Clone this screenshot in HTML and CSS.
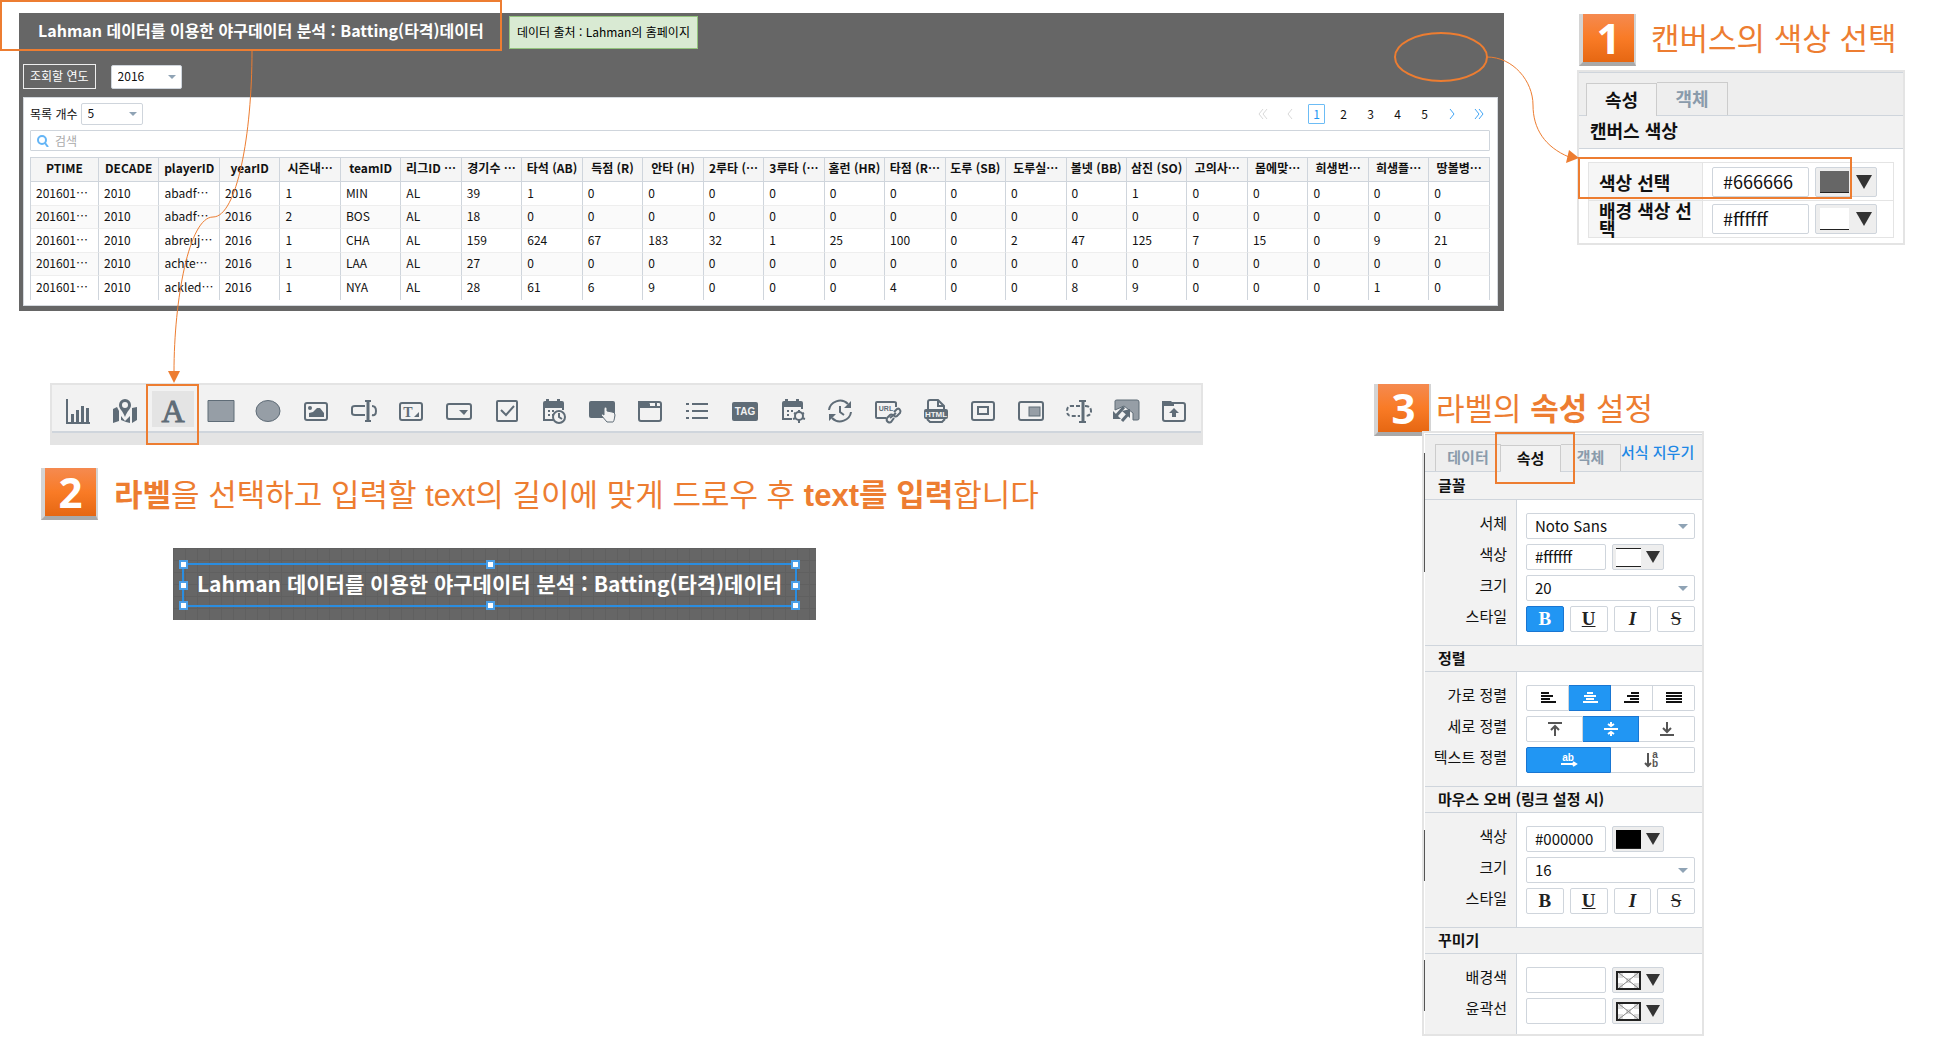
FILE: index.html
```html
<!DOCTYPE html>
<html lang="ko">
<head>
<meta charset="utf-8">
<title>Lahman 야구데이터 대시보드 만들기</title>
<link rel="stylesheet" href="styles.css">
</head>
<body>
<main class="page">
  <div class="row row-top">
    <section class="dashboard">
      <header class="dash-head">
        <h1 class="dash-title">Lahman 데이터를 이용한 야구데이터 분석 : Batting(타격)데이터</h1>
        <a class="source" href="#source">데이터 출처 : Lahman의 홈페이지</a>
      </header>
      <div class="filter">
        <label class="filter-label" for="year">조회할 연도</label>
        <span class="select select-year"><select id="year"><option>2016</option></select></span>
      </div>
      <div class="card">
        <div class="card-top">
          <label for="count">목록 개수</label>
          <span class="select select-count"><select id="count"><option>5</option></select></span>
          <nav class="pager" aria-label="페이지">
            <button class="off" type="button" aria-label="처음"><svg viewBox="0 0 12 12"><path d="M6 1 2 6l4 5M10 1 6 6l4 5"/></svg></button>
            <button class="off" type="button" aria-label="이전"><svg viewBox="0 0 12 12"><path d="M8 1 4 6l4 5"/></svg></button>
            <button class="on" type="button">1</button>
            <button type="button">2</button>
            <button type="button">3</button>
            <button type="button">4</button>
            <button type="button">5</button>
            <button class="go" type="button" aria-label="다음"><svg viewBox="0 0 12 12"><path d="m4 1 4 5-4 5"/></svg></button>
            <button class="go" type="button" aria-label="마지막"><svg viewBox="0 0 12 12"><path d="m2 1 4 5-4 5M6 1l4 5-4 5"/></svg></button>
          </nav>
        </div>
        <div class="search">
          <svg viewBox="0 0 12 12"><circle cx="5" cy="5" r="4"/><path d="m8 8 3 4"/></svg>
          <input type="text" placeholder="검색" aria-label="검색">
        </div>
        <table class="grid">
          <colgroup><col class="first"></colgroup>
          <thead>
            <tr><th>PTIME</th><th>DECADE</th><th>playerID</th><th>yearID</th><th>시즌내⋯</th><th>teamID</th><th>리그ID ⋯</th><th>경기수 ⋯</th><th>타석 (AB)</th><th>득점 (R)</th><th>안타 (H)</th><th>2루타 (⋯</th><th>3루타 (⋯</th><th>홈런 (HR)</th><th>타점 (R⋯</th><th>도루 (SB)</th><th>도루실⋯</th><th>볼넷 (BB)</th><th>삼진 (SO)</th><th>고의사⋯</th><th>몸에맞⋯</th><th>희생번⋯</th><th>희생플⋯</th><th>땅볼병⋯</th></tr>
          </thead>
          <tbody>
            <tr><td>201601⋯</td><td>2010</td><td>abadf⋯</td><td>2016</td><td>1</td><td>MIN</td><td>AL</td><td>39</td><td>1</td><td>0</td><td>0</td><td>0</td><td>0</td><td>0</td><td>0</td><td>0</td><td>0</td><td>0</td><td>1</td><td>0</td><td>0</td><td>0</td><td>0</td><td>0</td></tr>
            <tr><td>201601⋯</td><td>2010</td><td>abadf⋯</td><td>2016</td><td>2</td><td>BOS</td><td>AL</td><td>18</td><td>0</td><td>0</td><td>0</td><td>0</td><td>0</td><td>0</td><td>0</td><td>0</td><td>0</td><td>0</td><td>0</td><td>0</td><td>0</td><td>0</td><td>0</td><td>0</td></tr>
            <tr><td>201601⋯</td><td>2010</td><td>abreuj⋯</td><td>2016</td><td>1</td><td>CHA</td><td>AL</td><td>159</td><td>624</td><td>67</td><td>183</td><td>32</td><td>1</td><td>25</td><td>100</td><td>0</td><td>2</td><td>47</td><td>125</td><td>7</td><td>15</td><td>0</td><td>9</td><td>21</td></tr>
            <tr><td>201601⋯</td><td>2010</td><td>achte⋯</td><td>2016</td><td>1</td><td>LAA</td><td>AL</td><td>27</td><td>0</td><td>0</td><td>0</td><td>0</td><td>0</td><td>0</td><td>0</td><td>0</td><td>0</td><td>0</td><td>0</td><td>0</td><td>0</td><td>0</td><td>0</td><td>0</td></tr>
            <tr><td>201601⋯</td><td>2010</td><td>ackled⋯</td><td>2016</td><td>1</td><td>NYA</td><td>AL</td><td>28</td><td>61</td><td>6</td><td>9</td><td>0</td><td>0</td><td>0</td><td>4</td><td>0</td><td>0</td><td>8</td><td>9</td><td>0</td><td>0</td><td>0</td><td>1</td><td>0</td></tr>
          </tbody>
        </table>
      </div>
      <span class="mark mark-title"></span>
      <svg class="link-canvas" viewBox="0 0 192 140" aria-hidden="true">
        <ellipse cx="52" cy="32" rx="46" ry="24"/>
        <path class="thin" d="M98 32C124 32 144 56 144 80S156 122 180 132"/>
        <path class="tip" d="M180 125 177 138 190 133z"/>
      </svg>
      <svg class="link-label" viewBox="0 0 100 340" aria-hidden="true">
        <path class="thin" d="M92 11C92 94 77 177 53 177S14 260 14 332"/>
        <path class="tip" d="M8 331H20L14 343z"/>
      </svg>
    </section>

    <section class="side side-canvas">
      <h2 class="step step-one"><span class="badge">1</span><span class="step-text">캔버스의 색상 선택</span></h2>
      <div class="panel panel-canvas">
        <div class="tabs"><button class="tab on" type="button">속성</button><button class="tab" type="button">객체</button></div>
        <h3 class="head">캔버스 색상</h3>
        <div class="pairs">
          <label class="pair-name" for="canvas-color">색상 선택</label>
          <div class="pair-value"><input class="text" id="canvas-color" type="text" value="#666666"><button class="swatch" type="button" aria-label="색상 선택"><span class="chip chip-gray"></span><span class="caret"></span></button></div>
          <label class="pair-name" for="back-color">배경 색상 선택</label>
          <div class="pair-value"><input class="text" id="back-color" type="text" value="#ffffff"><button class="swatch" type="button" aria-label="배경 색상 선택"><span class="chip"></span><span class="caret"></span></button></div>
        </div>
        <span class="mark mark-color"></span>
      </div>
    </section>
  </div>

  <div class="row row-bottom">
    <section class="work">
      <div class="toolbar">
        <div class="tools">
          <button type="button" aria-label="차트"><svg viewBox="0 0 26 26"><path class="s" d="M2 1v24h23"/><path class="f" d="M6 16h3v8H6zM11 12h3v12h-3zM16 8h3v16h-3zM21 10h3v14h-3z"/></svg></button>
          <button type="button" aria-label="지도"><svg viewBox="0 0 26 26"><path class="f" d="M1 11l4-2 2 4v10l-6 2zM20 10l5-1v13l-5 3zM9 18l4 5 5-5v7l-4-1-5-2z"/><path class="f" fill-rule="evenodd" d="M13 1a6 6 0 0 1 6 6c0 4-4 6-6 12C11 13 7 11 7 7a6 6 0 0 1 6-6zm0 3a3 3 0 1 0 0 6 3 3 0 0 0 0-6z"/></svg></button>
          <button class="on" type="button" aria-label="라벨"><svg viewBox="0 0 26 26"><text x="13" y="24" class="glyph-a">A</text></svg><span class="mark mark-tool"></span></button>
          <button type="button" aria-label="사각형"><svg viewBox="0 0 26 26"><path class="g" d="M0 2.500h26v21H0z"/></svg></button>
          <button type="button" aria-label="원"><svg viewBox="0 0 26 26"><ellipse class="g" cx="13" cy="13" rx="12" ry="10.500"/></svg></button>
          <button type="button" aria-label="이미지"><svg viewBox="0 0 26 26"><rect class="s" x="2" y="5" width="22" height="17" rx="2"/><path class="f" d="M6 19v-4l4-1 4-4h3l4 5v4z"/><circle class="f" cx="7" cy="10" r="2"/></svg></button>
          <button type="button" aria-label="입력 상자"><svg viewBox="0 0 26 26"><path class="s" d="M14 8H4Q1 8 1 10v5q0 2 3 2h10M21 8q4 0 4 5t-4 4M14 3h6M14 23h6"/><path class="s w" d="M17 3v20"/></svg></button>
          <button type="button" aria-label="텍스트 영역"><svg viewBox="0 0 26 26"><rect class="s" x="2" y="5" width="22" height="17" rx="2"/><text class="glyph-t" x="10" y="19">T</text><path class="f" d="M21 14v5h-5z"/></svg></button>
          <button type="button" aria-label="콤보 상자"><svg viewBox="0 0 26 26"><rect class="s" x="1" y="6" width="24" height="15" rx="2"/><path class="f" d="M13 12h9l-4 5z"/></svg></button>
          <button type="button" aria-label="체크 상자"><svg viewBox="0 0 26 26"><rect class="s" x="3" y="3" width="20" height="20" rx="1"/><path class="s" d="m7 12 5 5 8-9"/></svg></button>
          <button type="button" aria-label="날짜"><svg viewBox="0 0 26 26"><path class="f" d="M2 10V5q0-2 2-2h1V1h3v2h8V1h3v2h2q2 0 2 2v5z"/><path class="s" d="M22 12V9M3 9v13h9"/><path class="f" d="M7 12h2v2H7zM11 12h2v2h-2zM7 16h2v2H7zM11 16h2v2h-2z"/><circle class="s l" cx="18" cy="19" r="6"/><path class="s" d="M18 15v4l3 2"/></svg></button>
          <button type="button" aria-label="버튼"><svg viewBox="0 0 26 26"><rect class="f" x="0" y="3" width="26" height="17" rx="2"/><path class="l e" d="M15 10q2-2 3 0v3l5 1q3 0 3 3-1 7-2 7h-6l-6-7q1-2 3 0z"/></svg></button>
          <button type="button" aria-label="탭"><svg viewBox="0 0 26 26"><rect class="s" x="2" y="4" width="22" height="19" rx="2"/><path class="f" d="M1 3h10l2 3v4H1zM13 8h11v2H13zM18 5h2v4h-2z"/></svg></button>
          <button type="button" aria-label="목록"><svg viewBox="0 0 26 26"><path class="s" d="M8 6h16M8 13h16M8 20h16M2 6h3M2 13h3M2 20h3"/></svg></button>
          <button type="button" aria-label="태그"><svg viewBox="0 0 26 26"><rect class="f" x="0" y="4" width="26" height="19" rx="2"/><text class="glyph-tag" x="13" y="17">TAG</text></svg></button>
          <button type="button" aria-label="일정 설정"><svg viewBox="0 0 26 26"><path class="f" d="M2 9V5q0-2 2-2h1V1h3v2h8V1h3v2h2q2 0 2 2v4z"/><path class="s" d="M22 11V9M3 9v12h9"/><path class="f" d="M7 12h2v2H7zM11 12h2v2h-2zM7 16h2v2H7z"/><circle class="s l" cx="19" cy="18" r="4"/><path class="s" d="M19 12v2M19 22v3M14 15l2 1M22 20l3 1M24 15l-2 1M16 20l-3 1"/></svg></button>
          <button type="button" aria-label="새로 고침"><svg viewBox="0 0 26 26"><path class="s" d="M2 12C3 4 14-1 21 6M24 14C23 22 12 27 5 20M13 8v6l4 3"/><path class="f" d="M24 3v7h-7zM2 23v-7h7z"/></svg></button>
          <button type="button" aria-label="URL"><svg viewBox="0 0 26 26"><path class="s" d="M21 9V5q0-1-2-1H2Q1 4 1 5v14q0 1 1 1h9"/><text class="glyph-url" x="11" y="13">URL</text><path class="s" d="m15 20 6-5M19 14l3-3q2-1 3 1 1 1 0 3l-3 3q-1 1-3 0M18 17q-2-1-3 0l-3 3q-1 3 1 4 2 1 3 0l3-4"/></svg></button>
          <button type="button" aria-label="HTML"><svg viewBox="0 0 26 26"><path class="s" d="M5 11V4q0-2 2-2h8l6 6v3M15 2v6h6M4 21l3 3h12l3-3"/><rect class="f" x="1" y="11" width="24" height="10" rx="2"/><text class="glyph-html" x="13" y="19">HTML</text></svg></button>
          <button type="button" aria-label="팝업"><svg viewBox="0 0 26 26"><rect class="s" x="2" y="4" width="22" height="18" rx="2"/><rect class="s" x="8" y="9" width="10" height="7"/></svg></button>
          <button type="button" aria-label="패널"><svg viewBox="0 0 26 26"><rect class="s" x="1" y="4" width="24" height="18" rx="2"/><rect class="g" x="11" y="9" width="11" height="9"/></svg></button>
          <button type="button" aria-label="다중 입력"><svg viewBox="0 0 26 26"><path class="s" stroke-dasharray="4 2" d="M14 8H5Q1 8 1 13t4 5h9M19 8q6 0 6 5t-6 5"/><path class="s" d="M13 3h7M13 24h7"/><path class="s w" d="M17 3v20"/></svg></button>
          <button type="button" aria-label="확장"><svg viewBox="0 0 26 26"><path class="g" d="M2 12V3q0-1 2-1h20q2 0 2 2v17q0 1-2 1h-4v-7L11 8z"/><path class="s w" d="m3 18 8-9M9 23l7-8"/><path class="f" d="M0 13v8h8zM17 11v9l-8-7z"/></svg></button>
          <button type="button" aria-label="올리기"><svg viewBox="0 0 26 26"><rect class="s" x="2" y="5" width="22" height="18" rx="2"/><path class="f" d="M1 3h9l3 3v2H1zM13 10l5 5h-3v4h-4v-4H8z"/></svg></button>
        </div>
      </div>
      <h2 class="step step-two"><span class="badge">2</span><span class="step-text"><b>라벨</b>을 선택하고 입력할 <span class="latin">text</span>의 길이에 맞게 드로우 후 <b><span class="latin">text</span>를 입력</b>합니다</span></h2>
      <div class="canvas">
        <div class="picked">Lahman 데이터를 이용한 야구데이터 분석 : Batting(타격)데이터
          <i class="knob t l"></i><i class="knob t c"></i><i class="knob t r"></i><i class="knob m l"></i><i class="knob m r"></i><i class="knob b l"></i><i class="knob b c"></i><i class="knob b r"></i>
        </div>
      </div>
    </section>

    <section class="side side-label">
      <h2 class="step step-three"><span class="badge">3</span><span class="step-text">라벨의 <b>속성</b> 설정</span></h2>
      <div class="panel panel-label">
        <div class="tabs"><button class="tab" type="button">데이터</button><button class="tab on" type="button">속성</button><button class="tab" type="button">객체</button><a class="clear" href="#clear">서식 지우기</a></div>
        <h3 class="head">글꼴</h3>
        <div class="form">
          <label for="font">서체</label><div class="field"><span class="select"><select id="font"><option>Noto Sans</option></select></span></div>
          <label for="color">색상</label><div class="field"><input class="text" id="color" type="text" value="#ffffff"><button class="swatch" type="button" aria-label="색상"><span class="chip chip-lined"></span><span class="caret"></span></button></div>
          <label for="size">크기</label><div class="field"><span class="select"><select id="size"><option>20</option></select></span></div>
          <span class="name">스타일</span><div class="field styles"><button class="on" type="button"><b>B</b></button><button type="button"><u>U</u></button><button type="button"><i>I</i></button><button type="button"><s>S</s></button></div>
        </div>
        <h3 class="head">정렬</h3>
        <div class="form">
          <span class="name">가로 정렬</span>
          <div class="field segs">
            <button type="button" aria-label="왼쪽"><svg viewBox="0 0 16 14"><path d="M1 2h8M1 5h12M1 8h9M1 11h15"/></svg></button>
            <button class="on" type="button" aria-label="가운데"><svg viewBox="0 0 16 14"><path d="M5 2h6M2 5h12M4 8h8M1 11h15"/></svg></button>
            <button type="button" aria-label="오른쪽"><svg viewBox="0 0 16 14"><path d="M7 2h8M3 5h12M6 8h9M0 11h15"/></svg></button>
            <button type="button" aria-label="양쪽"><svg viewBox="0 0 16 14"><path d="M0 2h16M0 5h16M0 8h16M0 11h16"/></svg></button>
          </div>
          <span class="name">세로 정렬</span>
          <div class="field segs">
            <button class="soft" type="button" aria-label="위"><svg viewBox="0 0 16 14"><path d="M1 1h14M8 14V4M4 8l4-4 4 4"/></svg></button>
            <button class="on" type="button" aria-label="중간"><svg viewBox="0 0 16 14"><path d="M1 7h14M8 0v4M8 10v4M5 2l3 2 3-2M5 12l3-2 3 2"/></svg></button>
            <button class="soft" type="button" aria-label="아래"><svg viewBox="0 0 16 14"><path d="M1 13h14M8 0v10M4 6l4 4 4-4"/></svg></button>
          </div>
          <span class="name">텍스트 정렬</span>
          <div class="field segs">
            <button class="on" type="button" aria-label="가로쓰기"><svg viewBox="0 0 16 14"><text x="7" y="8">ab</text><path d="M0 11h15M12 9l3 2-3 2"/></svg></button>
            <button class="soft" type="button" aria-label="세로쓰기"><svg viewBox="0 0 16 14"><path d="M3 0v13M0 10l3 3 3-3"/><text x="10" y="5">a</text><text x="10" y="14">b</text></svg></button>
          </div>
        </div>
        <h3 class="head">마우스 오버 (링크 설정 시)</h3>
        <div class="form">
          <label for="over-color">색상</label><div class="field"><input class="text" id="over-color" type="text" value="#000000"><button class="swatch" type="button" aria-label="색상"><span class="chip chip-black"></span><span class="caret"></span></button></div>
          <label for="over-size">크기</label><div class="field"><span class="select"><select id="over-size"><option>16</option></select></span></div>
          <span class="name">스타일</span><div class="field styles"><button type="button"><b>B</b></button><button type="button"><u>U</u></button><button type="button"><i>I</i></button><button type="button"><s>S</s></button></div>
        </div>
        <h3 class="head">꾸미기</h3>
        <div class="form form-last">
          <label for="fill">배경색</label><div class="field"><input class="text" id="fill" type="text"><button class="swatch" type="button" aria-label="배경색"><svg class="none" viewBox="0 0 25 19"><path class="tile" d="M2 2h5v5H2zM18 2h5v5h-5zM10 7h5v5h-5zM2 12h5v5H2zM18 12h5v5h-5z"/><path d="M3 2l19 15M22 2 3 17"/><rect x="1" y="1" width="23" height="17"/></svg><span class="caret"></span></button></div>
          <label for="outline">윤곽선</label><div class="field"><input class="text" id="outline" type="text"><button class="swatch" type="button" aria-label="윤곽선"><svg class="none" viewBox="0 0 25 19"><path class="tile" d="M2 2h5v5H2zM18 2h5v5h-5zM10 7h5v5h-5zM2 12h5v5H2zM18 12h5v5h-5z"/><path d="M3 2l19 15M22 2 3 17"/><rect x="1" y="1" width="23" height="17"/></svg><span class="caret"></span></button></div>
        </div>
        <span class="edge edge-a"></span><span class="edge edge-b"></span><span class="edge edge-c"></span>
        <span class="mark mark-tab"></span>
      </div>
    </section>
  </div>
</main>
</body>
</html>
```
FILE: styles.css
```css
:root {
  --orange: #ed7d31;
  --slate: #5f6c77;
  --line: #cfd5dc;
  --blue: #2196f3;
}
* { box-sizing: border-box; }
body {
  margin: 0;
  background: #fff;
  color: #111;
  font-family: "Noto Sans CJK KR", "Noto Sans", sans-serif;
  font-size: 15px;
  overflow-x: hidden;
}
h1, h2, h3 { margin: 0; }
button, input, select { font: inherit; color: inherit; margin: 0; padding: 0; }
button { cursor: pointer; }
a { text-decoration: none; color: inherit; }

.row { display: flex; align-items: flex-start; }
.row-top { padding: 13px 28px 0 19px; gap: 73px; }
.row-bottom { margin-top: 72px; padding: 0 229px 0 41px; gap: 171px; }

/* orange callouts */
.mark { position: absolute; border: 2px solid var(--orange); pointer-events: none; z-index: 3; }
.link-canvas, .link-label { position: absolute; z-index: 4; fill: none; stroke: var(--orange); stroke-width: 2; overflow: visible; pointer-events: none; }
.link-canvas { width: 192px; height: 140px; top: 12px; right: -77px; }
.link-label { width: 100px; height: 340px; top: 27px; left: 141px; }
.thin { stroke-width: 1; }
.tip { fill: var(--orange); stroke: none; }

/* dashboard */
.dashboard { position: relative; flex: 1; min-width: 0; background: #666; padding: 3px 6px 5px 4px; }
.mark-title { left: -19px; top: -13px; width: 502px; height: 51px; }
.dash-head { display: flex; align-items: flex-start; }
.dash-title { width: 486px; padding-left: 15px; font-size: 16px; line-height: 28px; color: #fff; white-space: nowrap; }
.source { height: 33px; padding: 0 7px; border: 1px solid #93c47d; background: #d9ead3; color: #000; font-size: 12px; line-height: 30px; white-space: nowrap; }
.filter { display: flex; gap: 15px; margin-top: 15px; align-items: center; }
.filter-label { height: 25px; padding: 0 6px; border: 1px solid #eee; color: #fff; font-size: 12px; line-height: 22px; }

.select { position: relative; display: block; flex: 1; height: 26px; }
.select select { display: block; width: 100%; height: 100%; padding: 0 8px 2px; border: 1px solid var(--line); border-radius: 2px; background: #fff; appearance: none; outline: 0; }
.select::after { content: ""; position: absolute; right: 7px; top: 50%; margin-top: -2px; border: 5px solid transparent; border-top-color: #8fa3b5; border-bottom: 0; pointer-events: none; }
.select-year, .select-count { flex: none; font-size: 12px; }
.select-year { width: 71px; height: 24px; }
.select-count { width: 62px; height: 22px; }
.select-year select, .select-count select { padding: 0 6px 2px; }
.select-year::after, .select-count::after { border-width: 4px; border-bottom: 0; right: 6px; }

.card { margin-top: 8px; padding: 5px 7px 5px 6px; border: 1px solid #d5d9de; background: #fff; }
.card-top { display: flex; align-items: center; gap: 3px; font-size: 12px; height: 22px; line-height: 18px; }
.pager { margin-left: auto; display: flex; align-items: center; gap: 10px; padding-right: 3px; }
.pager button { width: 17px; height: 20px; border: 1px solid transparent; border-radius: 1px; background: none; font-size: 12px; line-height: 16px; }
.pager .on { border-color: #6cbcf5; color: var(--blue); }
.pager svg { display: block; margin: auto; width: 12px; height: 12px; fill: none; stroke: #42a5f5; }
.pager .off svg { stroke: #d9d9d9; }
.search { display: flex; align-items: center; gap: 6px; height: 21px; margin: 5px 0 6px; padding: 0 6px; border: 1px solid var(--line); border-radius: 1px; }
.search svg { width: 12px; height: 12px; fill: none; stroke: #64b5f6; stroke-width: 2; }
.search input { flex: 1; height: 16px; border: 0; outline: 0; font-size: 12px; line-height: 16px; }
.search input::placeholder { color: #aaa; }

.grid { width: 100%; table-layout: fixed; border-collapse: separate; border-spacing: 0; font-size: 12px; line-height: 16px; border-left: 1px solid var(--line); }
.first { width: 68px; }
.grid th, .grid td { height: 23px; padding: 0 0 2px 5px; border-right: 1px solid var(--line); white-space: nowrap; overflow: hidden; }
.grid th { height: 25px; padding: 0 2px 4px; text-align: center; border-top: 1px solid var(--line); border-bottom: 1px solid var(--line); background: #f5f5f5; }
.grid td { text-align: left; border-bottom: 1px solid #eee; }
.grid tbody tr:nth-child(odd) td { height: 24px; }
.grid tbody tr:nth-child(even) td { background: #fafafa; }
.grid tbody tr:last-child td { border-bottom: 0; }

/* step headings */
.step { display: flex; font-size: 31px; font-weight: 400; color: var(--orange); }
.step-text { line-height: 46px; white-space: nowrap; }
.badge {
  flex: none; width: 57px; height: 52px; border: solid #d4d4d4; border-width: 0 2px 4px 4px; border-bottom-color: #a9a9a9;
  background: linear-gradient(#f58a50, #f97b26 50%, #e66712);
  color: #fff; font: bold 42px/48px "Noto Sans", sans-serif; text-align: center;
}
.latin { font-family: "Liberation Sans", sans-serif; }
.step-one { gap: 15px; margin: 1px 0 4px 2px; }
.step-two { gap: 16px; margin-top: 23px; height: 52px; }
.step-two .step-text { line-height: 50px; }
.step-three { gap: 5px; height: 47px; margin-top: 1px; }

/* property panels */
.side-canvas { flex: none; width: 328px; }
.side-label { flex: none; width: 330px; }
.panel { position: relative; border: 2px solid #e4e4e4; background: #fff; z-index: 1; }
.tabs { display: flex; align-items: flex-end; background: #eee; border-top: 1px solid var(--line); border-bottom: 1px solid var(--line); }
.tab { border: 1px solid #ccc; border-bottom: 0; background: #eee; color: #8a9bab; font-weight: 700; }
.tab + .tab { border-left: 0; }
.tab.on { background: #f2f2f2; color: #111; margin-bottom: -1px; }
.head { background: #f2f2f2; border-bottom: 1px solid var(--line); font-size: inherit; font-weight: 700; }
.text { height: 26px; border: 1px solid var(--line); border-radius: 2px; background: #fff; outline: 0; padding: 0 8px 2px; }
.swatch { display: flex; align-items: center; justify-content: space-between; height: 26px; padding: 0 3px; border: 1px solid var(--line); border-radius: 2px; background: #eee; }
.chip { width: 25px; height: 19px; background: #fff; border-bottom: 1px solid #222; }
.chip-lined { border-top: 1px solid #222; }
.chip-black { background: #000; }
.chip-gray { background: #666; }
.caret { border: 7px solid transparent; border-top: 12px solid #333; border-bottom: 0; }
.none { width: 25px; height: 19px; fill: none; stroke: #888; background: #fff; }
.none .tile { fill: #ddd; stroke: none; }
.none rect { stroke: #222; stroke-width: 2; }

.panel-canvas { font-size: 18px; padding-bottom: 5px; }
.panel-canvas .tabs { height: 44px; padding-left: 7px; }
.panel-canvas .tab { width: 71px; height: 33px; padding-bottom: 2px; line-height: 28px; }
.panel-canvas .head { height: 33px; padding-left: 11px; line-height: 29px; }
.pairs { display: grid; grid-template-columns: 114px 1fr; margin: 13px 9px 0; border: 1px solid #e4e4e4; }
.pairs > * { height: 37px; }
.pairs > :nth-child(n+3) { border-top: 1px solid #e4e4e4; }
.pair-name { display: flex; align-items: center; padding: 0 10px; background: #f6f6f6; border-right: 1px solid #e4e4e4; font-weight: 700; line-height: 18px; word-break: break-all; }
.pair-value { display: flex; align-items: center; gap: 6px; padding-left: 9px; }
.panel-canvas .text { width: 97px; height: 30px; padding: 0 10px 2px; }
.panel-canvas .swatch { width: 62px; height: 30px; padding: 0 4px; }
.panel-canvas .chip { width: 29px; height: 22px; }
.panel-canvas .caret { border-width: 14px 8px 0; }
.mark-color { left: -1px; top: 85px; width: 274px; height: 42px; }

.panel-label { margin-left: 48px; padding-left: 1px; }
.panel-label .tabs { height: 38px; padding-left: 10px; margin-top: 1px; }
.panel-label .tab { width: 60px; height: 27px; line-height: 22px; padding-bottom: 2px; }
.panel-label .tab:first-child { width: 66px; }
.clear { align-self: flex-start; margin-top: 8px; line-height: 18px; color: #1e88e5; font-weight: 500; white-space: nowrap; }
.panel-label .head { height: 28px; padding-left: 13px; line-height: 25px; }
.panel-label .head ~ .head { height: 27px; line-height: 23px; border-top: 1px solid var(--line); }
.form { display: grid; grid-template-columns: 91px 1fr; row-gap: 5px; padding: 13px 7px 13px 0; background: linear-gradient(90deg, #f2f2f2 91px, var(--line) 91px, var(--line) 92px, #fff 92px); }
.form-last { padding-bottom: 10px; }
.form > label, .name { text-align: right; padding-right: 9px; line-height: 20px; white-space: nowrap; }
.field { display: flex; gap: 6px; height: 26px; margin-left: 10px; }
.field .text { width: 80px; }
.field .swatch { width: 52px; }
.styles button { flex: 1; border: 1px solid var(--line); border-radius: 2px; background: #fff; color: #222; font: bold 19px/22px "Liberation Serif", serif; }
.styles s { font-weight: 400; }
.styles .on { background: var(--blue); border-color: #1976d2; color: #fff; }
.segs { gap: 0; }
.segs button { flex: 1; border: 1px solid var(--line); border-left-width: 0; background: #fff; color: #111; }
.segs button:first-child { border-left-width: 1px; border-radius: 2px 0 0 2px; }
.segs button:last-child { border-radius: 0 2px 2px 0; }
.segs .soft { color: #555; }
.segs .on { background: var(--blue); border-color: #1976d2; color: #fff; }
.segs svg { display: block; margin: auto; width: 16px; height: 14px; fill: none; stroke: currentColor; stroke-width: 2; overflow: visible; }
.segs text { fill: currentColor; stroke: none; font: bold 10px "Liberation Sans", sans-serif; text-anchor: middle; }
.mark-tab { left: 71px; top: -1px; width: 80px; height: 52px; }
.edge { position: absolute; left: 0; width: 1px; background: #555; }
.edge-a { top: 20px; height: 119px; }
.edge-b { top: 397px; height: 51px; }
.edge-c { top: 527px; height: 51px; }

/* component toolbar */
.work { flex: 1; min-width: 0; }
.toolbar { margin-left: 9px; border: 2px solid #e4e4e4; border-bottom: 12px solid #e4e4e4; background: #f2f2f2; }
.tools { display: grid; grid-template-columns: repeat(24, 1fr); justify-items: center; padding: 6px 3px 4px 2px; border-bottom: 2px solid var(--line); }
.tools button { position: relative; width: 42px; height: 36px; border: 0; background: none; }
.tools .on { background: #e4e4e4; }
.tools svg { display: block; margin: 3px auto 0; width: 26px; height: 26px; overflow: visible; fill: none; }
.tools .s { stroke: var(--slate); stroke-width: 2; }
.tools .w { stroke-width: 3; }
.tools .f { fill: var(--slate); }
.tools .g { fill: #969ea6; stroke: var(--slate); stroke-width: 1; }
.tools .l { fill: #f2f2f2; }
.tools .e { stroke: var(--slate); stroke-width: 1; }
.tools text { fill: var(--slate); text-anchor: middle; font-weight: 700; font-family: "Liberation Sans", sans-serif; }
.tools .glyph-a { font: 32px "Liberation Serif", serif; stroke: var(--slate); stroke-width: 1; }
.tools .glyph-t { font: bold 14px "Liberation Serif", serif; }
.tools .glyph-tag { fill: #f2f2f2; font-size: 10px; }
.tools .glyph-url { font-size: 7px; }
.tools .glyph-html { fill: #f2f2f2; font-size: 8px; }
.mark-tool { left: -6px; top: -7px; width: 53px; height: 61px; }

/* label being drawn on the canvas */
.canvas {
  width: 643px; margin: 28px 0 0 132px; padding: 15px 19px 13px 9px; background-color: #666;
  background-image: linear-gradient(#606060 1px, transparent 1px), linear-gradient(90deg, #606060 1px, transparent 1px);
  background-size: 12px 12px;
}
.picked { position: relative; height: 44px; border: 2px solid #2a8de0; color: #fff; font-size: 21px; font-weight: 700; line-height: 37px; text-align: center; white-space: nowrap; }
.knob { position: absolute; width: 9px; height: 9px; border: 2px solid #4a9fe8; background: #fff; }
.knob.t { top: -5px; }
.knob.m { top: 16px; }
.knob.b { bottom: -5px; }
.knob.l { left: -5px; }
.knob.c { left: 50%; margin-left: -4px; }
.knob.r { right: -5px; }
```
